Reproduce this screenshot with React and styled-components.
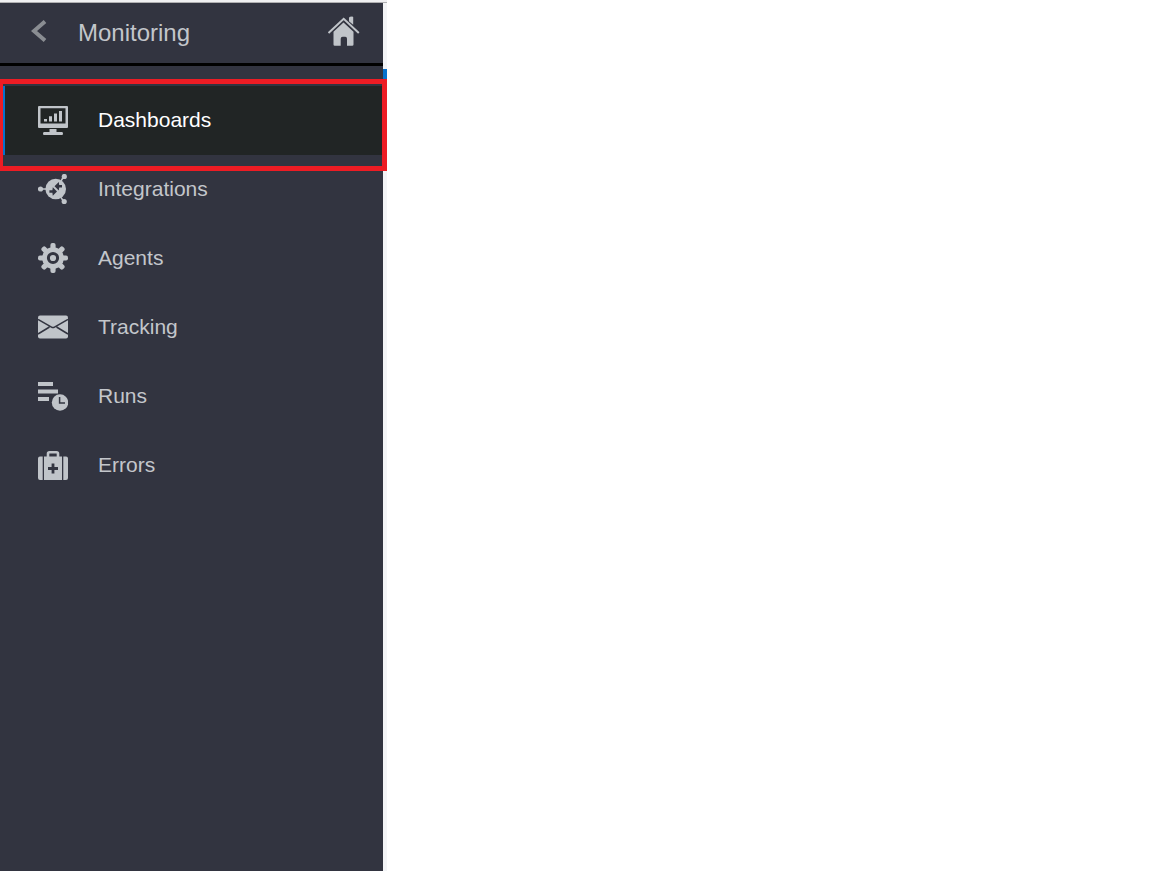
import React from "react";
import styled, { createGlobalStyle } from "styled-components";

const colors = {
  panel: "#323440",
  active: "#212525",
  text: "#c3c6cb",
  icon: "#c0c4c9",
  blue: "#0572ce",
  red: "#ed1c24",
};

const GlobalStyle = createGlobalStyle`
  * { box-sizing: border-box; }
  body {
    margin: 0;
    background: #fff;
    font-family: "Liberation Sans", Arial, sans-serif;
  }
`;

const Page = styled.div`
  display: flex;
  min-height: 100vh;
`;

const Drawer = styled.aside`
  flex: none;
  display: flex;
  flex-direction: column;
  width: 387px;
  background: #f3f4f6;
  border-top: 2px solid #f0f0f2;
`;

const Edge = styled.div`
  height: 1px;
  background: #b0b0b2;
`;

const DrawerBody = styled.div`
  flex: 1;
  display: flex;
`;

const Panel = styled.div`
  flex: 1;
  background: ${colors.panel};
`;

const Gutter = styled.div`
  width: 4px;
  padding-top: 66px;
`;

const GutterMark = styled.div`
  height: 12px;
  background: ${colors.blue};
`;

const Header = styled.header`
  display: flex;
  align-items: center;
  height: 63px;
  padding: 0 22px 0 31px;
  border-bottom: 3px solid #000;
`;

const IconButton = styled.button`
  display: flex;
  padding: 0 0 4px;
  border: 0;
  background: none;
  color: ${(p) => p.$color || colors.icon};
  cursor: pointer;
`;

const Title = styled.h1`
  flex: 1;
  margin: 0 0 0 31px;
  font-size: 24px;
  line-height: 28px;
  font-weight: 400;
  color: ${colors.text};
`;

const Menu = styled.ul`
  margin: 0;
  padding: 20px 0 0;
  list-style: none;
`;

const MenuItem = styled.li`
  position: relative;
`;

const MenuLink = styled.a`
  display: flex;
  align-items: center;
  gap: 30px;
  height: 69px;
  padding-left: 33px;
  border-left: 5px solid ${(p) => (p.$active ? colors.blue : "transparent")};
  background: ${(p) => (p.$active ? colors.active : "transparent")};
  color: ${(p) => (p.$active ? "#fff" : colors.text)};
  font-size: 21px;
  line-height: 24px;
  text-decoration: none;

  svg { color: ${colors.icon}; }
`;

const MenuLabel = styled.span`
  padding-bottom: 1px;
`;

const Highlight = styled.div`
  position: absolute;
  z-index: 1;
  top: -7px;
  left: 0;
  right: -4px;
  bottom: -16px;
  border: 5px solid ${colors.red};
  border-left-width: 3px;
  pointer-events: none;
`;

const Content = styled.main`
  flex: 1;
`;

const Icon = ({ children }) => (
  <svg width="30" height="31" viewBox="0 0 30 31" fill="currentColor" aria-hidden="true">
    {children}
  </svg>
);

const DashboardsIcon = () => (
  <Icon>
    <path fillRule="evenodd" d="M1 1h28a1 1 0 0 1 1 1v20a1 1 0 0 1-1 1H1a1 1 0 0 1-1-1V2a1 1 0 0 1 1-1zM2.500 3.300v15.200h25V3.300z" />
    <path d="M6 14h3v2.500H6zM11 11.300h3v5.200h-3zM16 8.500h3v8h-3zM21 6h3v10.500h-3zM11.500 24h7v3h5.500q1 0 1 1.500T24 30H6q-1 0-1-1.500T6 27h5.500z" />
  </Icon>
);

const IntegrationsIcon = () => (
  <Icon>
    <path d="M2 15h8M23 7l3-5M22 22l4 6" stroke="currentColor" strokeWidth="1.500" />
    <circle cx="2.500" cy="15" r="2.600" />
    <circle cx="26.300" cy="2.500" r="2.600" />
    <circle cx="26.200" cy="27.500" r="2.600" />
    <circle cx="17.700" cy="15" r="10.300" />
    <path d="M16.500 12.300L20.800 8l.4 3H24v2.500h-2.800l-.4 3zM19 17.500L14.800 21.700l-.4-3h-3V16.300h3l.4-3z" fill={colors.panel} />
  </Icon>
);

const AgentsIcon = () => (
  <Icon>
    {[0, 45, 90, 135].map((a) => (
      <rect key={a} x="12.400" y="0" width="5.200" height="30" rx="2" transform={`rotate(${a} 15 15)`} />
    ))}
    <circle cx="15" cy="15" r="10.800" />
    <circle cx="15" cy="15" r="4.600" fill="none" stroke={colors.panel} strokeWidth="3" />
  </Icon>
);

const TrackingIcon = () => (
  <Icon>
    <rect y="3.500" width="30" height="23" rx="2" />
    <path d="M0 7.500l13.500 7.600q1.500.9 3 0L30 7.500M0 22l11.500-7M30 22l-11.500-7" fill="none" stroke={colors.panel} strokeWidth="1.500" />
  </Icon>
);

const RunsIcon = () => (
  <Icon>
    <path d="M0 1h15v4H0zM0 8.500h20v4H0zM0 16h11v4H0z" />
    <circle cx="22" cy="21.500" r="9" fill={colors.panel} />
    <circle cx="22" cy="21.500" r="8.200" />
    <path d="M21.600 16v5.900H27" fill="none" stroke={colors.panel} strokeWidth="1.500" />
  </Icon>
);

const ErrorsIcon = () => (
  <Icon>
    <path d="M10 7V3.700a1.500 1.500 0 0 1 1.500-1.500h7A1.500 1.500 0 0 1 20 3.700V7" fill="none" stroke="currentColor" strokeWidth="2.600" />
    <path d="M6 6.500h18V30H6zM4.700 6.500V30H2a2 2 0 0 1-2-2V8.500a2 2 0 0 1 2-2zM25.300 6.500V30H28a2 2 0 0 0 2-2V8.500a2 2 0 0 0-2-2z" />
    <path d="M15 13.500v10M10 18.500h10" fill="none" stroke={colors.panel} strokeWidth="2.800" />
  </Icon>
);

const BackIcon = () => (
  <svg width="16" height="22" viewBox="0 0 16 22" aria-hidden="true">
    <path d="M14 1.500L3 11L14 20.500" fill="none" stroke="currentColor" strokeWidth="4" />
  </svg>
);

const HomeIcon = () => (
  <svg width="34" height="32" viewBox="0 0 34 32" fill="currentColor" aria-hidden="true">
    <path d="M16.500 7.500l10 9.200v12.800q0 1.300-1.300 1.300H20v-7q0-2-1.700-2h-2.600q-2 0-2 2v7H7.800q-1.300 0-1.300-1.300V16.700z" />
    <path d="M1.500 18L16.700 3.800L31.800 18" fill="none" stroke="currentColor" strokeWidth="2" />
    <path d="M22 3q0-1 1-1.200l2-.4q1.200 0 1.200 1.200v7.200l-4.200-3.600z" />
  </svg>
);

const items = [
  { label: "Dashboards", Glyph: DashboardsIcon, active: true },
  { label: "Integrations", Glyph: IntegrationsIcon },
  { label: "Agents", Glyph: AgentsIcon },
  { label: "Tracking", Glyph: TrackingIcon },
  { label: "Runs", Glyph: RunsIcon },
  { label: "Errors", Glyph: ErrorsIcon },
];

export default function App() {
  return (
    <Page>
      <GlobalStyle />
      <Drawer>
        <Edge />
        <DrawerBody>
          <Panel>
            <Header>
              <IconButton type="button" aria-label="Back" $color="#8a8d92">
                <BackIcon />
              </IconButton>
              <Title>Monitoring</Title>
              <IconButton type="button" aria-label="Home">
                <HomeIcon />
              </IconButton>
            </Header>
            <nav aria-label="Monitoring">
              <Menu>
                {items.map(({ label, Glyph, active }) => (
                  <MenuItem key={label}>
                    <MenuLink href="#" $active={active} aria-current={active ? "page" : undefined}>
                      <Glyph />
                      <MenuLabel>{label}</MenuLabel>
                    </MenuLink>
                    {active && <Highlight />}
                  </MenuItem>
                ))}
              </Menu>
            </nav>
          </Panel>
          <Gutter>
            <GutterMark />
          </Gutter>
        </DrawerBody>
      </Drawer>
      <Content />
    </Page>
  );
}
